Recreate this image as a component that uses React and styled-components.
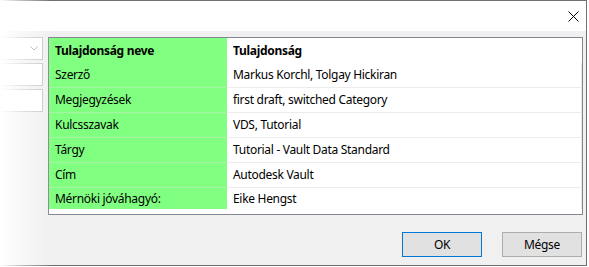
import React from "react";
import styled, { createGlobalStyle } from "styled-components";

const Global = createGlobalStyle`
  html, body { margin: 0; padding: 0; background: #ffffff; }
  body { font-family: "Segoe UI", "Noto Sans", "Open Sans", sans-serif; font-size: 12px; letter-spacing: -0.3px; color: #000; }
`;

const Window = styled.div`
  position: relative;
  box-sizing: border-box;
  width: 587px;
  height: 266px;
  border: 1px solid #707070;
  border-left: none;
  background: #f0f0f0;
  display: flex;
  flex-direction: column;
`;

const Fade = styled.div`
  position: absolute;
  left: 0;
  top: -1px;
  bottom: -1px;
  width: 52px;
  pointer-events: none;
  background: linear-gradient(to right, rgba(255,255,255,1) 0%, rgba(255,255,255,0.55) 40%, rgba(255,255,255,0) 100%);
`;

const TitleBar = styled.div`
  height: 30px;
  background: #ffffff;
  display: flex;
  align-items: center;
  justify-content: flex-end;
  padding-right: 7px;
`;

const Client = styled.div`
  flex: 1;
  display: flex;
  flex-direction: column;
  padding: 6px 3px 8px 0;
`;

const Body = styled.div`
  display: flex;
  gap: 5px;
  height: 178px;
`;

const LeftCol = styled.div`
  width: 43px;
  display: flex;
  flex-direction: column;
  gap: 3px;
`;

const Field = styled.div`
  box-sizing: border-box;
  height: 23px;
  background: #ffffff;
  border: 1px solid #c4c4c4;
  display: flex;
  align-items: center;
  justify-content: flex-end;
  padding-right: 4px;
`;

const Grid = styled.div`
  box-sizing: border-box;
  width: 535px;
  height: 178px;
  border: 1px solid #828790;
  background: #ffffff;
  overflow: hidden;
  display: flex;
  flex-direction: column;
`;

const Row = styled.div`
  display: grid;
  grid-template-columns: 178px 1fr;
  height: ${(p) => p.$h || 25}px;
  flex: none;
`;

const NameCell = styled.div`
  box-sizing: border-box;
  background: #80ff80;
  padding-left: 6px;
  display: flex;
  align-items: center;
  padding-bottom: ${(p) => (p.$last ? 0 : 1)}px;
  font-weight: ${(p) => (p.$head ? 700 : 400)};
  border-bottom: ${(p) => (p.$line ? "1px solid #a8f2a8" : "none")};
  white-space: nowrap;
`;

const ValueCell = styled.div`
  box-sizing: border-box;
  padding-left: 6px;
  display: flex;
  align-items: center;
  padding-bottom: ${(p) => (p.$last ? 0 : 1)}px;
  font-weight: ${(p) => (p.$head ? 700 : 400)};
  border-bottom: ${(p) => (p.$line ? "1px solid #ececec" : "none")};
  border-right: ${(p) => (p.$head ? "none" : "1px solid #e6e6e6")};
  white-space: nowrap;
`;

const Buttons = styled.div`
  margin-top: 17px;
  display: flex;
  justify-content: flex-end;
  gap: 20px;
  padding-right: 1px;
`;

const Button = styled.div`
  box-sizing: border-box;
  width: 80px;
  height: 25px;
  background: #e1e1e1;
  border: 1px solid ${(p) => (p.$default ? "#0078d7" : "#adadad")};
  display: flex;
  align-items: center;
  justify-content: center;
  padding-bottom: 1px;
`;

const rows = [
  ["Szerző", "Markus Korchl, Tolgay Hickiran"],
  ["Megjegyzések", "first draft, switched Category"],
  ["Kulcsszavak", "VDS, Tutorial"],
  ["Tárgy", "Tutorial - Vault Data Standard"],
  ["Cím", "Autodesk Vault"],
  ["Mérnöki jóváhagyó:", "Eike Hengst"],
];

export default function App() {
  return (
    <>
      <Global />
      <Window>
        <TitleBar>
          <svg width="11" height="11" viewBox="0 0 11 11">
            <path d="M0.5 0.5 L10.5 10.5 M10.5 0.5 L0.5 10.5" stroke="#000" strokeWidth="1" fill="none" />
          </svg>
        </TitleBar>
        <Client>
          <Body>
            <LeftCol>
              <Field>
                <svg width="8" height="5" viewBox="0 0 8 5">
                  <path d="M0.5 0.5 L4 4 L7.5 0.5" stroke="#a0a0a0" strokeWidth="1" fill="none" />
                </svg>
              </Field>
              <Field />
              <Field />
            </LeftCol>
            <Grid>
              <Row>
                <NameCell $head>Tulajdonság neve</NameCell>
                <ValueCell $head>Tulajdonság</ValueCell>
              </Row>
              {rows.map(([n, v], i) => {
                const last = i === rows.length - 1;
                return (
                  <Row key={n} $h={last ? 21 : 25}>
                    <NameCell $line={!last} $last={last}>{n}</NameCell>
                    <ValueCell $line={!last} $last={last}>{v}</ValueCell>
                  </Row>
                );
              })}
            </Grid>
          </Body>
          <Buttons>
            <Button $default>OK</Button>
            <Button>Mégse</Button>
          </Buttons>
        </Client>
        <Fade />
      </Window>
    </>
  );
}
